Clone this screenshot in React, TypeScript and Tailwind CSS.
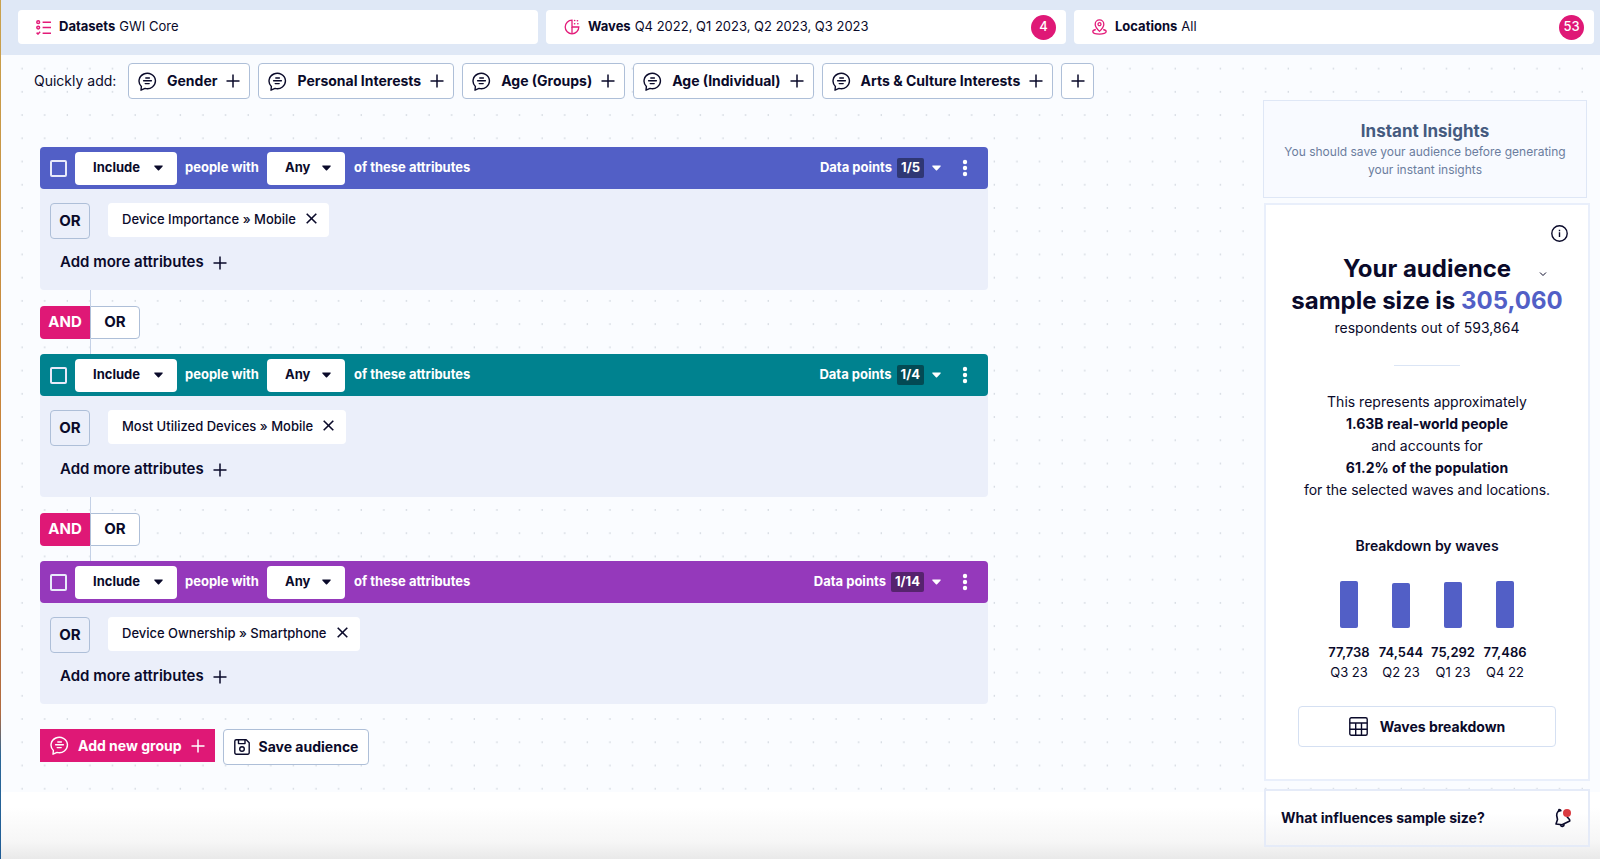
import React from "react";

function PlusIcon() {
  return (
    <svg width="14" height="14" viewBox="0 0 14 14" fill="none" stroke="currentColor" strokeWidth="1.5" aria-hidden="true">
      <path d="M7 .5v13M.5 7h13" />
    </svg>
  );
}

function ChatIcon() {
  return (
    <svg width="19" height="19" viewBox="0 0 19 19" fill="none" stroke="currentColor" strokeWidth="1.4" strokeLinecap="round" strokeLinejoin="round" aria-hidden="true">
      <path d="M3.4 14.4A8.2 7.7 0 1 1 7 16.4L3 18.2z" />
      <path d="M7.8 6h3.6M5.6 8.8h7.8M7.2 11.6h4" />
    </svg>
  );
}

function ListIcon() {
  return (
    <svg width="15" height="15" viewBox="0 0 15 15" fill="none" stroke="currentColor" strokeWidth="1.5" aria-hidden="true">
      <circle cx="2.2" cy="2.2" r="1.4" />
      <circle cx="2.2" cy="7.6" r="1.4" />
      <path d="M.6 12.6 2 14l2.2-2.2M6.6 2.2H15M6.600 7.6H15M6.600 13.2H15" />
    </svg>
  );
}

function PieIcon() {
  return (
    <svg width="16" height="16" viewBox="0 0 16 16" fill="none" stroke="currentColor" strokeWidth="1.3" aria-hidden="true">
      <path d="M8 1.2a6.8 6.8 0 1 0 6.8 6.8H8z" />
      <path d="M8 8v6.8" />
      <path d="M10.6 1.5h.1M10.6 4.8h.1M13.8 4.8h.1M13.4 1.8h.1" strokeWidth="1.6" strokeLinecap="round" />
    </svg>
  );
}

function PinIcon() {
  return (
    <svg width="15" height="16" viewBox="0 0 15 16" fill="none" stroke="currentColor" strokeWidth="1.3" aria-hidden="true">
      <path d="M7.5 12.4C5 10 3.2 7.700 3.2 5.2a4.3 4.3 0 0 1 8.6 0c0 2.5-1.8 4.8-4.3 7.2z" />
      <circle cx="7.5" cy="5.2" r="1.5" />
      <path d="M3.8 10.5C2 10.9.8 11.7.8 12.6c0 1.5 3 2.6 6.7 2.6s6.7-1.1 6.7-2.6c0-.9-1.2-1.700-3-2.1" />
    </svg>
  );
}

function Caret() {
  return (
    <svg width="9" height="6" viewBox="0 0 9 6" fill="currentColor" aria-hidden="true">
      <path d="M.8.5h7.4c.5 0 .7.5.4.9L5.1 5.3c-.3.4-.9.4-1.2 0L.4 1.4C.1 1 .3.5.8.5z" />
    </svg>
  );
}

function Dots() {
  return (
    <svg className="size-full" aria-hidden="true">
      <defs>
        <pattern id="dots" x="10" y="2" width="22.61" height="23.23" patternUnits="userSpaceOnUse">
          <rect x="10.5" y="11" width="1.2" height="1.2" fill="#bcc4ce" />
        </pattern>
      </defs>
      <rect width="100%" height="100%" fill="url(#dots)" />
    </svg>
  );
}

function Filter({ icon, name, value, count }: { icon: React.ReactNode; name: string; value: string; count?: string }) {
  return (
    <button className="flex h-[34px] min-w-0 flex-1 items-center rounded-[4px] bg-white pr-[10px] pl-[18px] text-left text-[13px]">
      <span className="mr-2 text-[#e31b79]">{icon}</span>
      <b className="mr-1 font-bold">{name}</b>
      <span className="truncate">{value}</span>
      {count && (
        <span className="ml-auto flex size-[25px] shrink-0 items-center justify-center rounded-full bg-[#df1876] font-medium text-white">{count}</span>
      )}
    </button>
  );
}

function Picker({ label, value, options, wide }: { label: string; value: string; options: string[]; wide?: boolean }) {
  return (
    <span className={`relative flex h-[33px] items-center text-[#0a0a2a] ${wide ? "w-[102px]" : "w-[78px]"}`}>
      <select aria-label={label} defaultValue={value} className="size-full appearance-none rounded-[4px] bg-white pl-[18px] text-[13px] font-bold">
        {options.map((o) => (
          <option key={o}>{o}</option>
        ))}
      </select>
      <span className="pointer-events-none absolute right-[14px]">
        <Caret />
      </span>
    </span>
  );
}

type Group = { color: string; badge: string; points: string; attribute: string };

const groups: Group[] = [
  { color: "bg-[#525fc6]", badge: "bg-[#2f3774]", points: "1/5", attribute: "Device Importance » Mobile" },
  { color: "bg-[#00828f]", badge: "bg-[#034a54]", points: "1/4", attribute: "Most Utilized Devices » Mobile" },
  { color: "bg-[#9539bb]", badge: "bg-[#56236e]", points: "1/14", attribute: "Device Ownership » Smartphone" },
];

function GroupCard({ color, badge, points, attribute }: Group) {
  return (
    <section className="rounded-[4px] bg-[#ebeffa] pb-3">
      <header className={`flex h-[42px] items-center rounded-[4px] px-[10px] text-[13px] font-bold text-white ${color}`}>
        <input type="checkbox" aria-label="Select group" className="mr-2 size-[17px] appearance-none rounded-[2px] border-2 border-[#e8eafa]" />
        <Picker label="Include or exclude" value="Include" options={["Include", "Exclude"]} wide />
        <span className="mx-2">people with</span>
        <Picker label="Match" value="Any" options={["Any", "All"]} />
        <span className="mx-[9px]">of these attributes</span>
        <button className="ml-auto flex items-center">
          Data points
          <span className={`mr-2 ml-[5px] flex h-5 items-center rounded-[2px] px-1 ${badge}`}>{points}</span>
          <Caret />
        </button>
        <button aria-label="Group options" className="mr-[10px] ml-[21px]">
          <svg width="6" height="18" viewBox="0 0 6 18" fill="currentColor" aria-hidden="true">
            <circle cx="3" cy="3" r="2.2" />
            <circle cx="3" cy="9" r="2.2" />
            <circle cx="3" cy="15" r="2.2" />
          </svg>
        </button>
      </header>
      <div className="mt-[14px] flex gap-[18px] pl-[10px]">
        <button className="h-9 w-10 rounded-[4px] border border-[#aebfd8] text-[15px] font-bold">OR</button>
        <div className="flex h-[34px] items-center gap-[10px] rounded-[4px] bg-white pr-3 pl-[14px] text-[13px] font-medium">
          {attribute}
          <button aria-label="Remove attribute" className="pb-[3px]">
            <svg width="11" height="11" viewBox="0 0 11 11" stroke="#0a0a2a" strokeWidth="1.6" aria-hidden="true">
              <path d="m.7.7 9.6 9.6M10.3.7.7 10.3" />
            </svg>
          </button>
        </div>
      </div>
      <button className="mt-2 ml-5 flex h-[31px] items-center gap-[9px] text-[15px] font-semibold">
        Add more attributes <PlusIcon />
      </button>
    </section>
  );
}

function Connector() {
  return (
    <div className="flex flex-col">
      <span className="ml-[50px] h-4 w-px bg-[#c4d1e6]" />
      <div className="flex h-[33px] text-[15px] font-bold">
        <button className="w-[50px] rounded-l-[4px] bg-[#df1876] text-white">AND</button>
        <button className="w-[50px] rounded-r-[4px] border border-[#aebfd8] bg-white">OR</button>
      </div>
      <span className="ml-[50px] h-[15px] w-px bg-[#c4d1e6]" />
    </div>
  );
}

const waves = [
  { count: "77,738", label: "Q3 23", height: 47 },
  { count: "74,544", label: "Q2 23", height: 45 },
  { count: "75,292", label: "Q1 23", height: 46 },
  { count: "77,486", label: "Q4 22", height: 47 },
];

const quick = ["Gender", "Personal Interests", "Age (Groups)", "Age (Individual)", "Arts & Culture Interests"];

export default function App() {
  return (
    <div className="flex min-h-screen bg-white font-['Inter','Liberation_Sans',sans-serif] text-[#0a0a2a]">
      <div className="w-px shrink-0 bg-[linear-gradient(to_bottom,#c9a24e,#c7833a_50%,#b06a40_83%,#2a6798_88%,#1f5c96)]" />
      <div className="flex min-w-0 flex-1 flex-col bg-linear-to-b from-white from-94% via-[#f6f6f6] via-98% to-[#e9e9e9]">
        <div className="flex gap-2 bg-[#dfe8f6] pt-[10px] pr-[6px] pb-[11px] pl-[17px]">
          <Filter icon={<ListIcon />} name="Datasets" value="GWI Core" />
          <Filter icon={<PieIcon />} name="Waves" value="Q4 2022, Q1 2023, Q2 2023, Q3 2023" count="4" />
          <Filter icon={<PinIcon />} name="Locations" value="All" count="53" />
        </div>
        <div className="relative">
          <div className="absolute inset-x-0 top-0 bottom-[67px] bg-[#fafcff]">
            <Dots />
          </div>
          <main className="relative flex items-start justify-between">
            <div className="w-[987px] shrink-0 pt-2">
              <div className="flex w-max items-center gap-2 pl-[33px] text-sm">
                <span className="w-[86px]">Quickly add:</span>
                {quick.map((q) => (
                  <button key={q} className="flex h-9 items-center rounded-[4px] border border-[#aebfd8] bg-white px-[9px] font-bold">
                    <ChatIcon />
                    <span className="mr-[9px] ml-[10px]">{q}</span>
                    <PlusIcon />
                  </button>
                ))}
                <button aria-label="Add attribute" className="flex h-9 w-[33px] items-center justify-center rounded-[4px] border border-[#aebfd8] bg-white">
                  <PlusIcon />
                </button>
              </div>
              <div className="mt-12 pl-[39px]">
                {groups.map((g, i) => (
                  <React.Fragment key={g.attribute}>
                    {i > 0 && <Connector />}
                    <GroupCard {...g} />
                  </React.Fragment>
                ))}
                <div className="mt-[25px] flex items-start gap-2 text-sm font-bold">
                  <button className="flex h-[33px] items-center gap-[9px] bg-[#df1876] px-[10px] text-white">
                    <ChatIcon />
                    Add new group
                    <PlusIcon />
                  </button>
                  <button className="flex h-9 items-center gap-[9px] rounded-[4px] border border-[#aebfd8] bg-white px-[10px]">
                    <svg width="16" height="16" viewBox="0 0 16 16" fill="none" stroke="currentColor" strokeWidth="1.4" strokeLinejoin="round" aria-hidden="true">
                      <path d="M2.2.8h10l3 3v10a1.4 1.4 0 0 1-1.4 1.4H2.2A1.4 1.4 0 0 1 .8 13.8V2.2A1.4 1.4 0 0 1 2.2.8z" />
                      <path d="M4.5 1v3.6h6.5V1" />
                      <circle cx="8" cy="10" r="2.3" />
                    </svg>
                    Save audience
                  </button>
                </div>
              </div>
            </div>
            <aside className="mt-[45px] mr-[10px] w-[327px]">
              <section className="mr-[3px] flex h-[98px] flex-col items-center justify-center border border-[#dfe7f6] bg-[#f8faff] text-center text-[#6b7d9e]">
                <h2 className="text-[17px] leading-6 font-bold text-[#455a80]">Instant Insights</h2>
                <p className="w-[290px] text-xs leading-[18px]">You should save your audience before generating your instant insights</p>
              </section>
              <section className="mt-[5px] ml-px flex flex-col items-center border-2 border-[#e9effb] bg-white text-center">
                <button aria-label="About sample size" className="mt-5 mr-5 self-end">
                  <svg width="17" height="17" viewBox="0 0 17 17" fill="none" stroke="#0a0a2a" strokeWidth="1.4" aria-hidden="true">
                    <circle cx="8.5" cy="8.5" r="7.7" />
                    <path d="M8.5 7.3v4.7M8.5 4.8v1.4" />
                  </svg>
                </button>
                <h2 className="relative mt-[11px] text-2xl leading-8 font-bold">
                  Your audience
                  <br />
                  sample size is <span className="text-[#525fc6]">305,060</span>
                  <svg className="absolute top-[18px] right-4" width="8" height="6" viewBox="0 0 8 6" fill="none" stroke="currentColor" aria-hidden="true">
                    <path d="m1 1.5 3 3 3-3" />
                  </svg>
                </h2>
                <p className="text-sm leading-[22px]">respondents out of 593,864</p>
                <hr className="mt-[26px] w-[66px] border-[#dbe5f5]" />
                <p className="mt-[25px] text-sm leading-[22px]">
                  This represents approximately
                  <br />
                  <b>1.63B real-world people</b>
                  <br />
                  and accounts for
                  <br />
                  <b>61.2% of the population</b>
                  <br />
                  for the selected waves and locations.
                </p>
                <h3 className="mt-[34px] text-sm leading-[22px] font-semibold">Breakdown by waves</h3>
                <div className="mt-6 flex gap-2 text-[13px] leading-5">
                  {waves.map((w) => (
                    <div key={w.label} className="flex w-11 flex-col items-center">
                      <div className="flex h-[47px] items-end">
                        <div className="w-[18px] rounded-[2px] bg-[#525fc6]" style={{ height: w.height }} />
                      </div>
                      <b className="mt-[14px] font-semibold">{w.count}</b>
                      <span>{w.label}</span>
                    </div>
                  ))}
                </div>
                <button className="mx-8 mt-6 mb-8 flex h-[41px] items-center justify-center gap-3 self-stretch rounded-[4px] border border-[#d5e0f2] text-sm font-bold">
                  <svg width="19" height="19" viewBox="0 0 19 19" fill="none" stroke="currentColor" strokeWidth="1.4" aria-hidden="true">
                    <rect x=".8" y=".8" width="17.4" height="17.4" rx="1.5" />
                    <path d="M.8 6h17.4M.8 12.2h17.4M6.7 6v12M12.5 6v12" />
                  </svg>
                  Waves breakdown
                </button>
              </section>
              <section className="mt-2 mb-3 ml-px flex h-[58px] items-center justify-between border-2 border-[#e5ebf8] bg-linear-to-b from-white from-40% to-[#f4f4f5] pr-4 pl-[15px]">
                <h3 className="text-sm font-bold">What influences sample size?</h3>
                <button aria-label="Notifications">
                  <svg width="18" height="20" viewBox="0 0 18 20" fill="none" stroke="#0a0a2a" strokeWidth="1.6" strokeLinejoin="round" aria-hidden="true">
                    <path d="M7.500 2.800C4.500 2.200 2.500 4.500 2.700 7.500L3.500 11.500 2 16l6 .8 7.800-3.800-.3-1.500-2.700-3" />
                    <path d="M6.500 17c.8 2.200 3.200 1.800 3.800-.8M4.300 3.800 5 1.500l2 .8" />
                    <circle cx="13" cy="5" r="4" fill="#d93a40" stroke="none" />
                  </svg>
                </button>
              </section>
            </aside>
          </main>
        </div>
      </div>
    </div>
  );
}
